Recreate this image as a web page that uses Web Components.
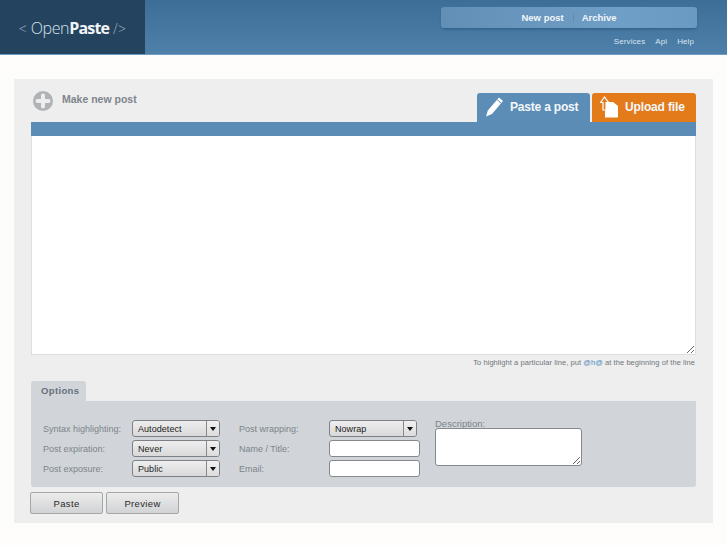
<!DOCTYPE html>
<html lang="en"><head><meta charset="utf-8"><title>OpenPaste</title>
<style>
html,body{margin:0;padding:0}
body{width:727px;height:545px;overflow:hidden;font-family:"Liberation Sans",Arial,sans-serif;background:repeating-conic-gradient(#fbfaf7 0 25%,#fff 0 50%) 0 0/2px 2px}
</style></head><body>
<op-header></op-header>
<op-panel>
  <op-compose></op-compose>
  <op-options></op-options>
  <op-actions></op-actions>
</op-panel>
<script>
function def(name,html){customElements.define(name,class extends HTMLElement{constructor(){super();this.attachShadow({mode:'open'}).innerHTML=html}})}
def('op-header',`<style>
:host{display:flex;height:54px;background:linear-gradient(#3c6e97,#4f80aa);box-shadow:0 1px 0 #6f9cc0}
.logo{width:145px;background:#24435f;display:flex;align-items:center;justify-content:center;color:#d9e2ea;font:300 16px "Open Sans",sans-serif;letter-spacing:-.4px;white-space:pre;box-sizing:border-box;padding-top:2px}
.logo b{font-weight:700;color:#f1f4f7;letter-spacing:-.8px}.logo i{font-style:normal;color:#9fb3c4;font-size:14px;letter-spacing:.2px}
.right{flex:1;display:flex;flex-direction:column;align-items:flex-end;padding:7px 30px 0 0}
nav{width:256px;height:21px;border-radius:3px;background:linear-gradient(90deg,#628fb6,#6f9ec6 70%,#6a9ac1);box-shadow:0 2px 3px -1px #2f5c82;display:flex;justify-content:center;align-items:center;color:#f2f6f9;font:bold 9.5px "Liberation Sans",sans-serif;box-sizing:border-box}
nav span{padding:0 9px 0 0}nav span+span{padding:0 0 0 8px;border-left:1px solid #5f8db3;line-height:9px}
.sub{display:flex;gap:10px;margin-top:9px;padding-right:3px;color:#d8e4ed;font:8px "Liberation Sans",sans-serif;letter-spacing:.1px}
</style><div class="logo"><span><i>&lt; </i>Open<b>Paste</b><i> /&gt;</i></span></div>
<div class="right"><nav><span>New post</span><span>Archive</span></nav><div class="sub"><span>Services</span><span>Api</span><span>Help</span></div></div>`);
def('op-panel',`<style>:host{display:block;box-sizing:border-box;width:699px;height:444px;margin:25px 0 0 14px;padding:14px 17px 0;background:#eeeeee}</style><slot></slot>`);
def('op-compose',`<style>
:host{display:block}
.top{display:flex;justify-content:space-between;height:29px}
.title{display:flex;gap:9px;color:#7e858c;font:bold 10.5px "Liberation Sans",sans-serif}
.title svg{margin:-2px 0 0 2px}
.tabs{display:flex;gap:2px}
.tab{height:29px;border-radius:3px 3px 0 0;color:#f4f7fa;font:bold 12px "Liberation Sans",sans-serif;letter-spacing:-.2px;display:flex;align-items:center;box-sizing:border-box}
.paste{width:113px;background:#5b8db7;padding:0 0 2px 8px;gap:6px}
.upload{width:104px;background:#e47b1b;padding:0 0 2px 8px;gap:6px}
.upload span{letter-spacing:-.15px}
.bar{height:14px;background:#5b8cb6}
textarea{display:block;box-sizing:border-box;width:665px;height:219px;margin:0;border:1px solid #dcdfe2;border-top:0;background:#fff;outline:0;resize:vertical}
.note{margin-top:2px;height:14px;text-align:right;color:#6f767c;font:7.5px "Liberation Sans",sans-serif;letter-spacing:.07px;line-height:12px;padding-right:1px}
.note b{font-weight:400;color:#4f8ac0}
</style>
<div class="top"><div class="title"><svg width="20" height="20" viewBox="0 0 20 20"><circle cx="10" cy="10" r="10" fill="#b0b3b6"/><path d="M10 4.500v11M4.500 10h11" stroke="#eeeeee" stroke-width="4" stroke-linecap="round"/></svg><span>Make new post</span></div>
<div class="tabs"><div class="tab paste"><svg width="19" height="20" viewBox="0 0 19 20"><path d="M14 .5l4 3.500L7 17l-6 2.500 1.800-6z" fill="#fff"/><path d="M12.200 2.800l3.900 3.400" stroke="#5b8db7" stroke-width="1"/></svg><span>Paste a post</span></div>
<div class="tab upload"><svg width="19" height="22" viewBox="0 0 19 22"><path d="M5 6h8l5 4v11.500H5z" fill="#fff"/><path d="M4.500 1L.5 6.500H3V14H6V6.500H8.500z" fill="#e47b1b" stroke="#fff" stroke-width="1.200"/></svg><span>Upload file</span></div></div></div>
<div class="bar"></div><textarea aria-label="Post"></textarea>
<div class="note">To highlight a particular line, put <b>@h@</b> at the beginning of the line</div>`);
def('op-select',`<style>
:host{display:flex;box-sizing:border-box;width:88px;height:17px;border:1px solid #7d8185;border-radius:3px;background:linear-gradient(#eeeeee,#d9d9d9);color:#1c1c1c;font:9px "Liberation Sans",sans-serif;letter-spacing:.05px;align-items:center;padding-left:5px}
.t{flex:1}.a{width:12px;height:15px;border-left:1px solid #85898d;display:flex;align-items:center;justify-content:center;background:linear-gradient(#f0f0f0,#dcdcdc);border-radius:0 2px 2px 0}
.a i{border:3px solid transparent;border-top:4px solid #111;border-bottom:0}
</style><span class="t"><slot></slot></span><span class="a"><i></i></span>`);
def('op-options',`<style>
:host{display:block;margin-top:10px;color:#7d848a;font:9px "Liberation Sans",sans-serif}
.otab{width:55px;height:20px;box-sizing:border-box;background:#d1d5d9;border-radius:3px 3px 0 0;color:#66707a;font:bold 9.5px/19px "Liberation Sans",sans-serif;letter-spacing:.35px;padding-left:10px}
.box{height:86px;box-sizing:border-box;background:#d1d5d9;border-radius:0 0 3px 3px;padding:19px 0 0 12px;display:flex}
.g{display:grid;grid-template-columns:89px 107px;grid-auto-rows:17px;row-gap:3px;align-items:center}
.g+.g{grid-template-columns:90px 106px}
.g span{white-space:nowrap}
.g:first-child span{padding-top:1px}
input{box-sizing:border-box;width:91px;height:17px;margin:0;border:1px solid #85898d;border-radius:3px;background:#fff;outline:0;padding:0}
.d{margin-top:-1px;font-size:9.500px;display:flex;flex-direction:column}
.d span{line-height:9px}
textarea{display:block;box-sizing:border-box;width:147px;height:38px;margin:0;border:1px solid #85898d;border-radius:3px;background:#fff;outline:0;resize:both;padding:0}
</style><div class="otab">Options</div><div class="box">
<div class="g"><span>Syntax highlighting:</span><op-select>Autodetect</op-select><span>Post expiration:</span><op-select>Never</op-select><span>Post exposure:</span><op-select>Public</op-select></div>
<div class="g"><span>Post wrapping:</span><op-select>Nowrap</op-select><span>Name / Title:</span><input aria-label="Name"><span>Email:</span><input aria-label="Email"></div>
<div class="d"><span>Description:</span><textarea aria-label="Description"></textarea></div></div>`);
def('op-actions',`<style>
:host{display:flex;gap:3px;margin:5px 0 0 -1px}
button{box-sizing:border-box;width:73px;height:22px;margin:0;padding:0;border:1px solid #a3a7aa;border-radius:2px;background:linear-gradient(#ececec,#d2d3d5);color:#2a2a2a;font:9.5px "Liberation Sans",sans-serif;letter-spacing:.35px}
</style><button>Paste</button><button>Preview</button>`);
</script></body></html>
